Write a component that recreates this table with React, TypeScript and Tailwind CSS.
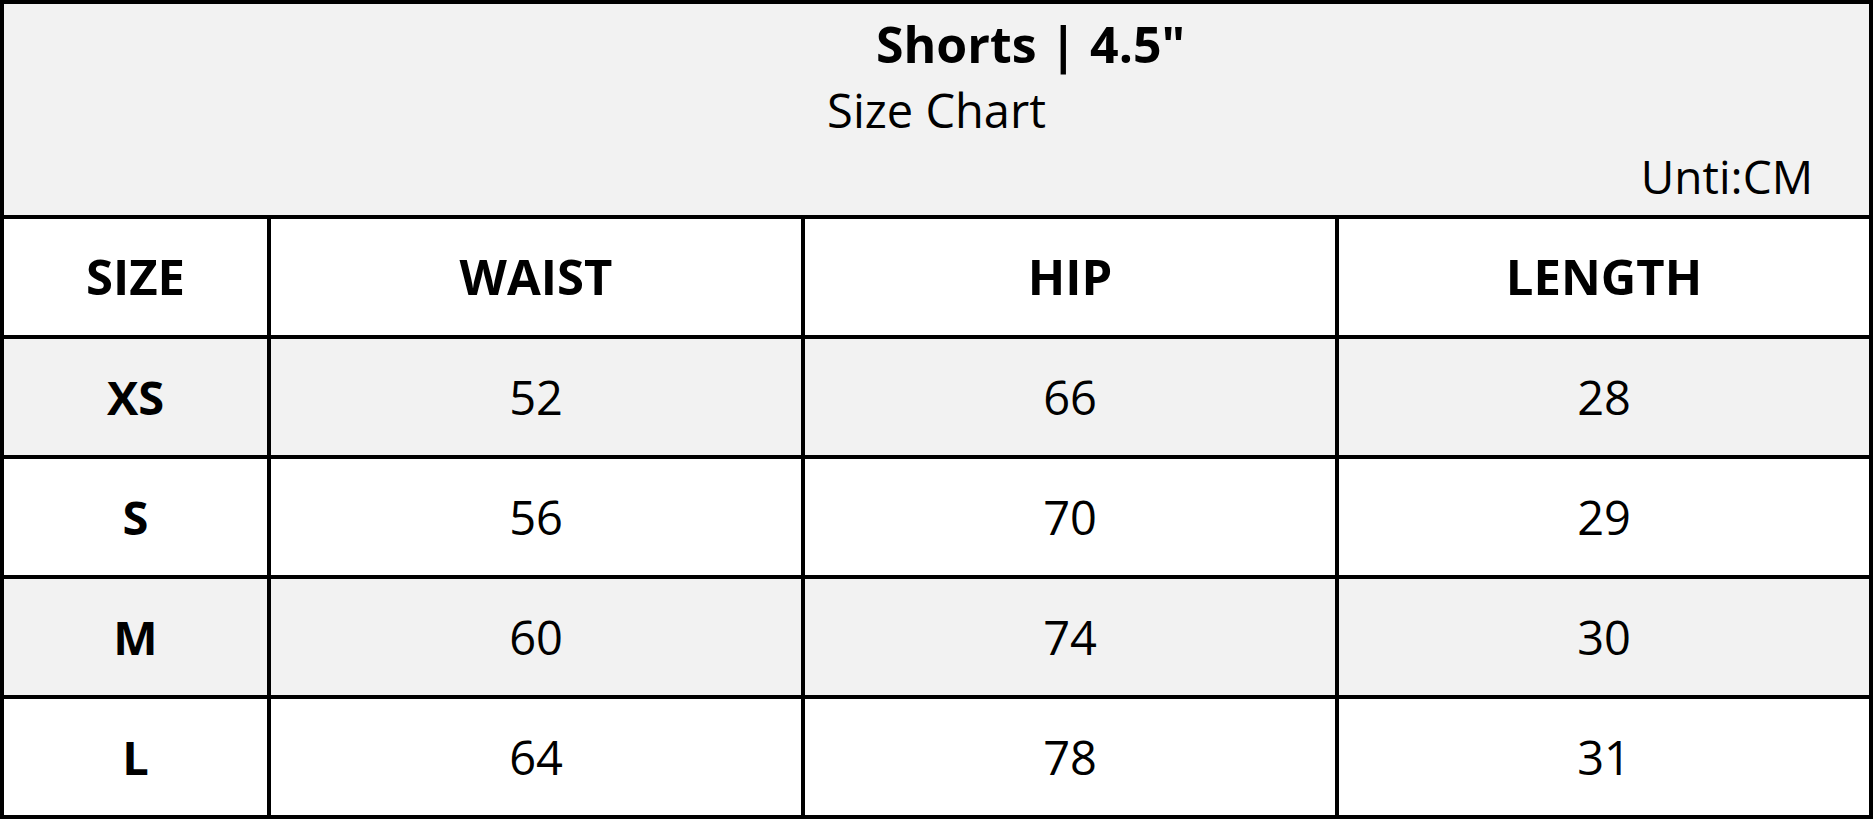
import React from "react";

const rows = [
  { size: "XS", waist: "52", hip: "66", length: "28", bg: "bg-[#f2f2f2]" },
  { size: "S", waist: "56", hip: "70", length: "29", bg: "bg-white" },
  { size: "M", waist: "60", hip: "74", length: "30", bg: "bg-[#f2f2f2]" },
  { size: "L", waist: "64", hip: "78", length: "31", bg: "bg-white" },
];

export default function App() {
  return (
    <div
      className="w-[1873px] h-[819px] border-4 border-black flex flex-col text-black bg-white"
      style={{ fontFamily: '"Open Sans", "Noto Sans", sans-serif' }}
    >
      <div className="h-[211px] bg-[#f2f2f2] flex flex-col pt-[10px]">
        <div className="h-[60px] leading-[60px] text-[50px] font-bold text-center pl-[188px]">
          Shorts | 4.5"
        </div>
        <div className="mt-[6px] h-[60px] leading-[60px] text-[47px] text-center">
          Size Chart
        </div>
        <div className="mt-[6px] h-[60px] leading-[60px] text-[46px] text-right pr-[56px]">
          Unti:CM
        </div>
      </div>
      <div className="grid grid-cols-[263px_534px_534px_534px] h-[120px] border-t-4 border-black bg-white text-[49px] font-bold">
        <div className="flex items-center justify-center">SIZE</div>
        <div className="flex items-center justify-center border-l-4 border-black">WAIST</div>
        <div className="flex items-center justify-center border-l-4 border-black">HIP</div>
        <div className="flex items-center justify-center border-l-4 border-black">LENGTH</div>
      </div>
      {rows.map((r) => (
        <div
          key={r.size}
          className={`grid grid-cols-[263px_534px_534px_534px] h-[120px] border-t-4 border-black ${r.bg} text-[47px]`}
        >
          <div className="flex items-center justify-center font-bold">{r.size}</div>
          <div className="flex items-center justify-center border-l-4 border-black">{r.waist}</div>
          <div className="flex items-center justify-center border-l-4 border-black">{r.hip}</div>
          <div className="flex items-center justify-center border-l-4 border-black">{r.length}</div>
        </div>
      ))}
    </div>
  );
}
